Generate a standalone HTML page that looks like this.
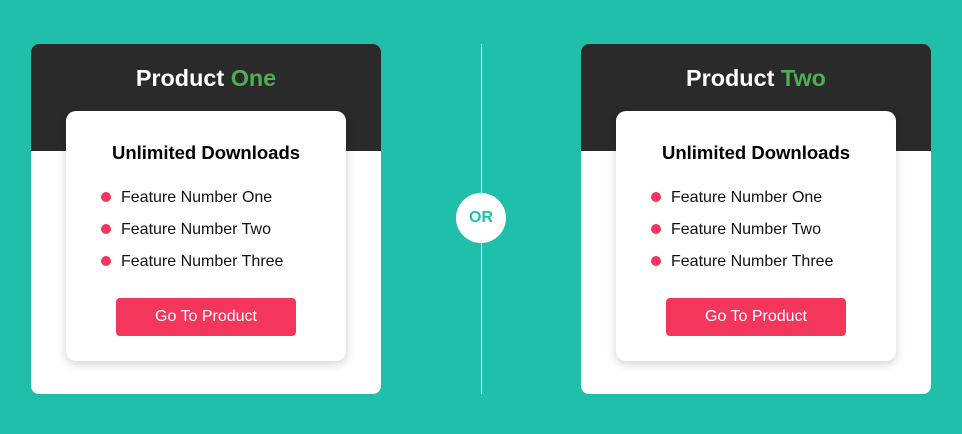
<!DOCTYPE html><html><head><style>
body{margin:0;width:962px;height:434px;background:#20bfa9;font-family:"Liberation Sans",sans-serif;position:relative;overflow:hidden}
.card{position:absolute;top:44px;width:350px;height:350px;background:#fff;border-radius:8px;overflow:hidden}
.hd{position:absolute;left:0;top:0;width:350px;height:107px;background:#2a2a2a}
.t{position:absolute;top:22px;width:100%;text-align:center;color:#fff;font-weight:bold;font-size:23.4px;line-height:24px}
.t span{color:#4caf50}
.in{position:absolute;left:35px;top:67px;width:280px;height:250px;background:#fff;border-radius:10px;box-shadow:0 3px 10px rgba(0,0,0,.18)}
.h{position:absolute;top:31px;width:100%;text-align:center;font-weight:bold;font-size:18.5px;color:#000}
.f{position:absolute;left:55px;font-size:16px;color:#111;line-height:18px}
.f:before{content:"";position:absolute;left:-20px;top:3px;width:10px;height:10px;border-radius:50%;background:#f5365c}
.b{position:absolute;left:50px;top:187px;width:180px;height:38px;background:#f5365c;border-radius:4px;color:#fff;font-size:16px;text-align:center;line-height:38px}
.line{position:absolute;left:481px;top:44px;width:1px;height:350px;background:#fff}
.or{position:absolute;left:456px;top:193px;width:50px;height:50px;border-radius:50%;background:#fff;color:#20bfa9;font-weight:bold;font-size:16px;text-align:center;line-height:50px}
</style></head><body>
<div class="card" style="left:31px"><div class="hd"></div><div class="t">Product <span>One</span></div>
<div class="in"><div class="h">Unlimited Downloads</div>
<div class="f" style="top:78px">Feature Number One</div><div class="f" style="top:110px">Feature Number Two</div><div class="f" style="top:142px">Feature Number Three</div>
<div class="b">Go To Product</div></div></div>
<div class="line"></div><div class="or">OR</div>
<div class="card" style="left:581px"><div class="hd"></div><div class="t">Product <span>Two</span></div>
<div class="in"><div class="h">Unlimited Downloads</div>
<div class="f" style="top:78px">Feature Number One</div><div class="f" style="top:110px">Feature Number Two</div><div class="f" style="top:142px">Feature Number Three</div>
<div class="b">Go To Product</div></div></div>
</body></html>
